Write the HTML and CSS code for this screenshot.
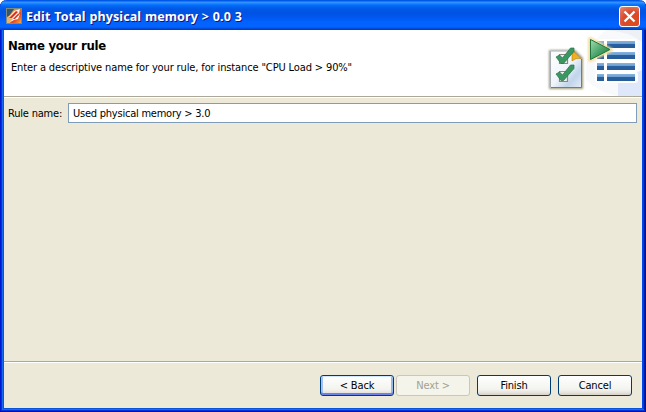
FILE: index.html
```html
<!DOCTYPE html>
<html lang="en">
<head>
<meta charset="utf-8">
<title>Edit Total physical memory &gt; 0.0 3</title>
<link rel="stylesheet" href="styles.css">
</head>
<body>
<div class="window">
  <div class="titlebar">
    <svg class="app-icon" width="16" height="16" viewBox="0 0 16 16">
      <defs><linearGradient id="app" x1="0" y1="0" x2="1" y2="1"><stop offset="0" stop-color="#46697c"/><stop offset=".35" stop-color="#e8903c"/><stop offset=".65" stop-color="#e0461f"/><stop offset="1" stop-color="#f5b84a"/></linearGradient></defs>
      <rect x=".5" y=".5" width="15" height="15" fill="url(#app)" stroke="#7b8b83"/>
      <path d="M1 1h7L3 8l-2 2z" fill="#35586e"/>
      <path d="M1 15V9l4-2 2 4-3 4z" fill="#e9b26a"/>
      <path d="M3 9L8 3l6-2-1 4-6 6z" fill="#f9efe6"/>
      <path d="M3 10l7-7 2 1-6 6z" fill="#d8301d"/>
      <path d="M4 14l4-4 6-4-2 5-4 1z" fill="#fff"/>
      <path d="M7 11l5-5 1 1-4 4z" fill="#d8301d"/>
    </svg>
    <span class="caption">Edit Total physical memory &gt; 0.0 3</span>
    <button class="close" aria-label="Close"><svg width="21" height="21" viewBox="0 0 21 21"><path d="M5.500 5.500l10 10M15.500 5.500l-10 10" stroke="#fff" stroke-width="2.300"/></svg></button>
  </div>
  <div class="header">
    <div class="heading">
      <h1><span>Name your rule</span></h1>
      <p>Enter a descriptive name for your rule, for instance "CPU Load &gt; 90%"</p>
    </div>
    <svg class="banner" width="102" height="66" viewBox="540 30 102 66">
      <defs>
        <linearGradient id="bar" x1="0" y1="0" x2="0" y2="1"><stop offset="0" stop-color="#84b4de"/><stop offset=".4" stop-color="#6f9fd0"/><stop offset=".5" stop-color="#2860a0"/><stop offset="1" stop-color="#285c98"/></linearGradient>
        <linearGradient id="page" x1="0" y1="0" x2="1" y2="1"><stop offset="0" stop-color="#fff"/><stop offset=".5" stop-color="#f1f5fa"/><stop offset=".75" stop-color="#c0d4ec"/><stop offset="1" stop-color="#e4ecf8"/></linearGradient>
        <linearGradient id="tri" x1="0" y1="0" x2="1" y2="1"><stop offset="0" stop-color="#a5dcb0"/><stop offset=".5" stop-color="#4aa56a"/><stop offset="1" stop-color="#1b7038"/></linearGradient>
        <filter id="soft" x="-30%" y="-30%" width="160%" height="160%"><feGaussianBlur stdDeviation="1.2"/></filter>
      </defs>
      <path d="M586 80Q584 46 606 30H642V96H616Q598 91 586 80z" fill="#f8f9fb"/>
      <path d="M606 30H642V42Q628 31 606 30z" fill="#edf1f5"/>
      <path d="M618 96V84Q618 79 624 79L642 70V96z" fill="#dfe7fa"/>
      <path d="M549 50h26l8 8v31h-34z" fill="#a09a7c" filter="url(#soft)"/>
      <path d="M550 50.500h22l9.500 8.500V87.500H550z" fill="url(#page)"/>
      <path d="M550.500 87.500V51H572" fill="none" stroke="#a6adb5"/>
      <path d="M581.500 59V87.500H551" fill="none" stroke="#727c85"/>
      <path d="M572 50l9 8.500q-5-1-9 2.500z" fill="#eeb01d" stroke="#b17e20" stroke-width=".6"/>
      <g fill="#eceeed" stroke="#858780" stroke-width="1.200"><path d="M559.500 54.500h8v9h-8zM559.500 71.500h8v10h-8z"/></g>
      <g fill="#3b9762" stroke="#267347" stroke-width=".7"><path d="M556 57l3.500-2 3 3 8-10h3.500v3.500l-10.500 12h-2.500z"/><path d="M556 74l3.500-2 3 3 8-10h3.500v3.500l-10.500 12h-2.500z"/></g>
      <g fill="#fff"><rect x="595" y="39" width="43" height="12" rx="3"/><rect x="595" y="50" width="43" height="11" rx="3"/><rect x="595" y="61" width="43" height="11" rx="3"/><rect x="595" y="72" width="43" height="11" rx="3"/></g>
      <g fill="url(#bar)"><rect x="597" y="41" width="7" height="7"/><rect x="607" y="41" width="28" height="7"/><rect x="597" y="52" width="7" height="7"/><rect x="607" y="52" width="28" height="7"/><rect x="597" y="63" width="7" height="7"/><rect x="607" y="63" width="28" height="7"/><rect x="597" y="74" width="7" height="7"/><rect x="607" y="74" width="28" height="7"/></g>
      <path d="M590 39v21l21-10z" fill="#e8cf83" stroke="#f3df9f" stroke-width="4" stroke-linejoin="round" filter="url(#soft)"/>
      <path d="M590.500 39.500v20l19.500-10z" fill="url(#tri)" stroke="#21723d"/>
    </svg>
  </div>
  <div class="content">
    <label for="rule"><span>Rule name:</span></label>
    <input id="rule" type="text" value="Used physical memory &gt; 3.0">
  </div>
  <div class="footer">
    <button class="btn default"><span>&lt; Back</span></button>
    <button class="btn next" disabled><span>Next &gt;</span></button>
    <button class="btn finish"><span>Finish</span></button>
    <button class="btn"><span>Cancel</span></button>
  </div>
</div>
</body>
</html>
```

FILE: styles.css
```css
* { box-sizing: border-box; }
body {
  margin: 0;
  background: #fff;
  font: 11px/14px "DejaVu Sans Condensed", "DejaVu Sans", sans-serif;
  font-stretch: condensed;
  color: #000;
}
.window {
  width: 646px;
  height: 412px;
  display: flex;
  flex-direction: column;
  padding: 0 4px 4px;
  overflow: hidden;
  border-radius: 7px 7px 0 0;
  background: #ece9d8;
  box-shadow: inset 0 -1px #00138c, inset 1px 0 #0019cf, inset -1px -1px #00138c, inset 2px -2px #0831d9, inset -2px -2px #001ea0, inset 3px -3px #166aee, inset -3px -3px #0441d8, inset 4px -4px #0855dd, inset -4px -4px #0048f1;
}
.titlebar {
  flex: 0 0 30px;
  display: flex;
  align-items: center;
  margin: 0 -4px;
  padding: 3px 6px 0;
  background: linear-gradient(#0058e6 0, #0058e6 1px, #3a93ff 2px, #288eff 3px, #127dff 4px, #036ffc 5px, #0262ee 7px, #0057e5 9px, #0054e3 13px, #0055eb 16px, #005bf5 19px, #0262fe 22px, #0264fe 27px, #0054e6 28px, #0042d0 29px, #003dc0 30px);
}
.app-icon { margin-top: -1px; }
.caption {
  flex: 1;
  margin-left: 4px;
  padding-top: 1px;
  color: #fff;
  font: bold 12.5px/16px "Noto Sans", sans-serif;
  letter-spacing: .1px;
  word-spacing: .5px;
  text-shadow: 1px 1px #0a1883;
  white-space: nowrap;
}
.close {
  width: 21px;
  height: 21px;
  padding: 0;
  border: 1px solid #fff;
  border-radius: 3px;
  background: radial-gradient(circle at 65% 75%, #e04a1b, #da4b2c 50%, #e88b75 100%);
}
.close svg { display: block; margin: -1px; }
.header {
  flex: 0 0 68px;
  display: flex;
  justify-content: space-between;
  background: #fff;
  border-bottom: 1px solid #fff;
  box-shadow: inset 0 -1px #aca899;
}
.heading { padding: 8px 0 0 4px; }
h1 {
  margin: 0;
  font: bold 13px/16px "DejaVu Sans Condensed", "DejaVu Sans", sans-serif;
  letter-spacing: -.28px;
}
p {
  margin: 7px 0 0 3px;
  letter-spacing: -.13px;
  white-space: nowrap;
}
.banner { flex: none; }
.content {
  flex: 1;
  display: flex;
  align-items: flex-start;
  padding: 5px 5px 0 4px;
}
label {
  width: 60px;
  padding-top: 4px;
  letter-spacing: -.2px;
  white-space: nowrap;
}
input {
  flex: 1;
  height: 20px;
  min-width: 0;
  padding: 1px 4px 0;
  border: 1px solid #7f9db9;
  background: #fff;
  font: inherit;
  letter-spacing: -.23px;
}
.footer {
  flex: 0 0 47px;
  display: flex;
  align-items: flex-start;
  justify-content: flex-end;
  padding: 13px 10px 0 0;
  border-top: 1px solid #aca899;
  box-shadow: inset 0 1px #fff;
}
.btn {
  width: 74px;
  height: 21px;
  padding: 0;
  border: 1px solid #003c74;
  border-radius: 3px;
  background: linear-gradient(#fff, #f3f3ef 70%, #e8e6df 85%, #d6d0c5);
  color: #000;
  font: inherit;
  letter-spacing: -.15px;
}
.default { box-shadow: inset 0 1px #cee7ff, inset 0 -2px #6982ee, inset 2px 0 #a5c1f3, inset -2px 0 #98b8ea; }
.next { margin: 0 7px 0 2px; background: #f5f4ea; border-color: #c9c7ba; color: #a1a192; }
.finish { margin-right: 7px; }
```
